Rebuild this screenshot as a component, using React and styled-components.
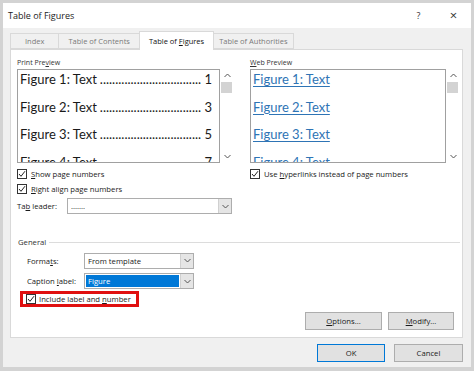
import React from 'react';
import styled, { createGlobalStyle } from 'styled-components';

const GlobalStyle = createGlobalStyle`
  html, body { margin: 0; padding: 0; background: #ffffff; }
  body { font-family: "Open Sans", "Noto Sans", sans-serif; }
  * { box-sizing: border-box; }
`;

const ui = `"Open Sans", "Noto Sans", sans-serif`;
const doc = `Lato, "Open Sans", sans-serif`;

const Frame = styled.div`
  width: 474px;
  height: 371px;
  border: 3px solid #d3d3d3;
  border-bottom-width: 4px;
  background: #f0f0f0;
  display: flex;
  flex-direction: column;
  font-family: ${ui};
  font-size: 7.7px;
  color: #1a1a1a;
`;

const TitleBar = styled.div`
  height: 25px;
  flex-shrink: 0;
  background: #ffffff;
  display: flex;
  align-items: center;
  padding: 0 0 1px 5px;
  font-size: 9px;
  color: #222;
`;

const Title = styled.span`
  flex: 1;
`;

const TitleButton = styled.span`
  width: 35px;
  text-align: center;
  font-size: ${p => (p.$big ? '13px' : '9px')};
  color: #333;
`;

const Body = styled.div`
  flex: 1;
  display: flex;
  flex-direction: column;
  padding: 3px 8px 0 7px;
`;

const TabStrip = styled.div`
  display: flex;
  align-items: flex-end;
  height: 18px;
  flex-shrink: 0;
  position: relative;
  z-index: 1;
`;

const Tab = styled.div`
  height: ${p => (p.$active ? '19px' : '16px')};
  margin-bottom: ${p => (p.$active ? '-1px' : '0')};
  padding: 0 ${p => p.$pad}px;
  display: flex;
  align-items: center;
  white-space: pre;
  background: ${p => (p.$active ? '#ffffff' : '#f0f0f0')};
  border: 1px solid #d9d9d9;
  border-bottom: ${p => (p.$active ? 'none' : '1px solid #d9d9d9')};
  margin-right: -1px;
  color: ${p => (p.$active ? '#111' : '#7a7a7a')};
  font-size: 7.5px;
`;

const Panel = styled.div`
  height: 289px;
  flex-shrink: 0;
  background: #ffffff;
  border: 1px solid #d9d9d9;
  padding: 6px 2px 0 6px;
  display: flex;
  flex-direction: column;
`;

const TopRow = styled.div`
  display: flex;
  gap: 16px;
`;

const Column = styled.div`
  width: ${p => p.$w}px;
  display: flex;
  flex-direction: column;
`;

const Label = styled.div`
  font-size: 7px;
  color: #333;
  height: 13px;
  line-height: 13px;
`;

const PreviewWrap = styled.div`
  display: flex;
  height: 94px;
  margin-bottom: 3px;
`;

const PreviewBox = styled.div`
  flex: 1;
  border: 1px solid #a0a0a0;
  overflow: hidden;
  padding: 0 7px 0 2px;
  font-family: ${doc};
  font-size: 13px;
`;

const Entry = styled.div`
  height: 27.5px;
  line-height: 18px;
  flex-shrink: 0;
  display: flex;
  white-space: nowrap;
  color: ${p => (p.$link ? '#2e74b5' : '#1a1a1a')};
  text-decoration: ${p => (p.$link ? 'underline' : 'none')};
  text-decoration-thickness: 1px;
  text-underline-offset: 2px;
`;

const Dots = styled.span`
  flex: 1;
  overflow: hidden;
  margin: 0 3px;
  &::before {
    content: '........................................................................';
  }
`;

const ScrollBar = styled.div`
  width: 14px;
  display: flex;
  flex-direction: column;
  align-items: center;
  justify-content: space-between;
  padding: 4px 0 4px;
  position: relative;
`;

const Thumb = styled.div`
  position: absolute;
  top: 13px;
  left: 1px;
  width: 11px;
  height: 11px;
  background: #d3d3d3;
`;

const CheckRow = styled.div`
  display: flex;
  align-items: center;
  gap: ${p => p.$gap || 4}px;
  height: ${p => p.$h || 15}px;
  font-size: 7.7px;
  color: #1a1a1a;
`;

const Box = styled.span`
  width: 10px;
  height: 10px;
  flex-shrink: 0;
  border: 1px solid #333;
  background: #fff;
  display: flex;
  align-items: center;
  justify-content: center;
`;

const FieldRow = styled.div`
  display: flex;
  align-items: center;
  height: ${p => p.$h || 20}px;
  padding-left: ${p => p.$indent || 0}px;
`;

const FieldLabel = styled.span`
  width: ${p => p.$w}px;
  font-size: 7.7px;
  color: #1a1a1a;
`;

const Select = styled.div`
  width: ${p => p.$w}px;
  height: 16px;
  border: 1px solid #adadad;
  background: #fff;
  display: flex;
  align-items: stretch;
  font-size: 7.7px;
`;

const SelectValue = styled.div`
  flex: 1;
  display: flex;
  align-items: center;
  padding: 1px;
`;

const Highlight = styled.span`
  flex: 1;
  height: 100%;
  display: flex;
  align-items: center;
  padding-left: 2px;
  background: ${p => (p.$on ? '#0078d7' : 'transparent')};
  color: ${p => (p.$on ? '#fff' : '#1a1a1a')};
`;

const SelectArrow = styled.div`
  width: 13px;
  background: #e5e5e5;
  border-left: 1px solid #d0d0d0;
  display: flex;
  align-items: center;
  justify-content: center;
`;

const GroupHead = styled.div`
  display: flex;
  align-items: center;
  gap: 3px;
  margin-top: 19px;
  height: 14px;
  padding-left: 1px;
  font-size: 7.7px;
  color: #333;
  &::after {
    content: '';
    flex: 1;
    height: 1px;
    background: #dcdcdc;
  }
`;

const RedBox = styled.div`
  align-self: flex-start;
  margin: 1px 0 0 3px;
  border: 3px solid #e01010;
  padding: 0 5px 0 3px;
`;

const ButtonRow = styled.div`
  display: flex;
  justify-content: flex-end;
  gap: ${p => p.$gap || 6}px;
  padding-right: ${p => p.$right || 0}px;
  margin-top: ${p => p.$top || 0}px;
`;

const Button = styled.div`
  width: ${p => p.$w || 72}px;
  height: 18px;
  border: 1px solid ${p => (p.$default ? '#0078d7' : '#adadad')};
  background: #e1e1e1;
  display: flex;
  align-items: center;
  justify-content: center;
  font-size: 7.7px;
  color: #1a1a1a;
  box-shadow: ${p => (p.$default ? 'inset 0 0 0 1px #e1e1e1' : 'none')};
`;

const U = styled.span`
  text-decoration: underline;
`;

const Chevron = ({ up }) => (
  <svg width="7" height="5" viewBox="0 0 7 5">
    <path d={up ? 'M0.5 4 L3.5 1 L6.5 4' : 'M0.5 1 L3.5 4 L6.5 1'} fill="none" stroke="#555" strokeWidth="1" />
  </svg>
);

const Check = () => (
  <svg width="8" height="8" viewBox="0 0 8 8">
    <path d="M1 4 L3 6.3 L7 1.2" fill="none" stroke="#222" strokeWidth="1" />
  </svg>
);

const Checkbox = ({ children, h, gap }) => (
  <CheckRow $h={h} $gap={gap}>
    <Box><Check /></Box>
    <span>{children}</span>
  </CheckRow>
);

const Scroll = () => (
  <ScrollBar>
    <Chevron up />
    <Thumb />
    <Chevron />
  </ScrollBar>
);

const figures = [
  ['Figure 1: Text', '1'],
  ['Figure 2: Text', '3'],
  ['Figure 3: Text', '5'],
  ['Figure 4: Text', '7'],
];

const Dropdown = ({ w, value, selected }) => (
  <Select $w={w}>
    <SelectValue>
      <Highlight $on={selected}>{value}</Highlight>
    </SelectValue>
    <SelectArrow><Chevron /></SelectArrow>
  </Select>
);

export default function App() {
  return (
    <>
      <GlobalStyle />
      <Frame>
        <TitleBar>
          <Title>Table of Figures</Title>
          <TitleButton>?</TitleButton>
          <TitleButton $big>×</TitleButton>
        </TitleBar>
        <Body>
          <TabStrip>
            <Tab $pad={14}><span>Index</span></Tab>
            <Tab $pad={9}><span>Table of Contents</span></Tab>
            <Tab $pad={9} $active><span>Table of <U>F</U>igures</span></Tab>
            <Tab $pad={5}><span>Table of Authorities</span></Tab>
          </TabStrip>
          <Panel>
            <TopRow>
              <Column $w={217}>
                <Label>Print Pre<U>v</U>iew</Label>
                <PreviewWrap>
                  <PreviewBox>
                    {figures.map(([t, n]) => (
                      <Entry key={t}>
                        <span>{t}</span>
                        <Dots />
                        <span>{n}</span>
                      </Entry>
                    ))}
                  </PreviewBox>
                  <Scroll />
                </PreviewWrap>
                <Checkbox h={15}><U>S</U>how page numbers</Checkbox>
                <Checkbox h={15}><U>R</U>ight align page numbers</Checkbox>
                <FieldRow $h={20}>
                  <FieldLabel $w={50}>Ta<U>b</U> leader:</FieldLabel>
                  <Dropdown w={165} value="......." />
                </FieldRow>
              </Column>
              <Column $w={211}>
                <Label><U>W</U>eb Preview</Label>
                <PreviewWrap>
                  <PreviewBox>
                    {figures.map(([t]) => (
                      <Entry key={t} $link>{t}</Entry>
                    ))}
                  </PreviewBox>
                  <Scroll />
                </PreviewWrap>
                <Checkbox h={15}>Use <U>h</U>yperlinks instead of page numbers</Checkbox>
              </Column>
            </TopRow>
            <GroupHead>General</GroupHead>
            <FieldRow $h={23} $indent={10}>
              <FieldLabel $w={57}>Forma<U>t</U>s:</FieldLabel>
              <Dropdown w={110} value="From template" />
            </FieldRow>
            <FieldRow $h={18} $indent={10}>
              <FieldLabel $w={57}>Caption <U>l</U>abel:</FieldLabel>
              <Dropdown w={110} value="Figure" selected />
            </FieldRow>
            <RedBox>
              <Checkbox h={10} gap={3}>Include label and <U>n</U>umber</Checkbox>
            </RedBox>
            <ButtonRow $gap={6} $right={6} $top={5}>
              <Button $w={77}><U>O</U>ptions...</Button>
              <Button $w={66}><U>M</U>odify...</Button>
            </ButtonRow>
          </Panel>
          <ButtonRow $gap={9} $right={-2} $top={6}>
            <Button $w={68} $default>OK</Button>
            <Button $w={69}>Cancel</Button>
          </ButtonRow>
        </Body>
      </Frame>
    </>
  );
}
